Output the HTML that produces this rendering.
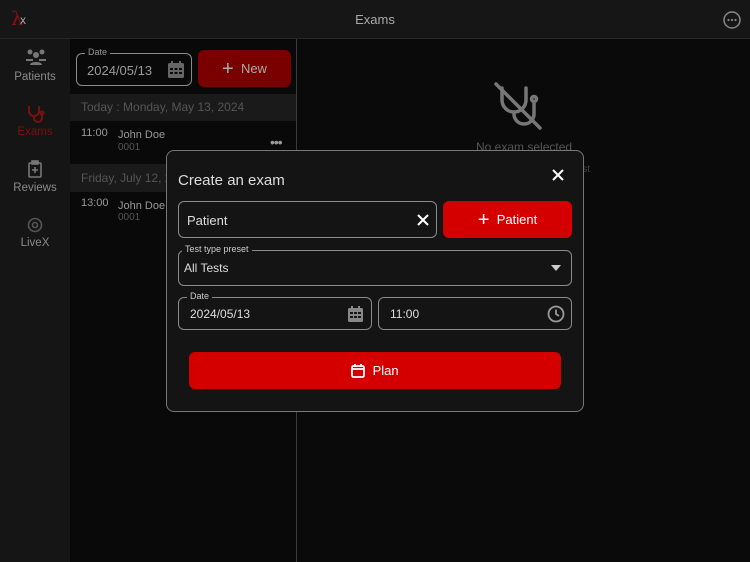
<!DOCTYPE html>
<html><head><meta charset="utf-8"><style>
*{box-sizing:border-box;margin:0;padding:0}
body{width:750px;height:562px;background:#0a0a0a;font-family:"Liberation Sans",sans-serif;color:#ddd;position:relative;overflow:hidden}
.abs{position:absolute}
.top{left:0;top:0;width:750px;height:39px;background:#161616;border-bottom:1px solid #262626}
.side{left:0;top:39px;width:70px;height:523px;background:#151515}
.list{left:70px;top:39px;width:227px;height:523px;background:#090909;border-right:1px solid #3a3a3a}
.nav{width:70px;text-align:center;font-size:11.5px;color:#8a8a8a}
.fld{border:1px solid #8a8a8a;border-radius:6px}
.lbl{position:absolute;top:-7px;left:8px;background:inherit;padding:0 3px;font-size:9px;color:#ccc}
.red{background:#d40000;border-radius:6px;color:#fff}
</style></head><body>
<div class="abs top"></div>
<div class="abs" style="left:11px;top:8px;font-size:19px;color:#8b1010;font-family:'DejaVu Serif',serif">λ</div>
<div class="abs" style="left:20px;top:13px;font-size:12px;color:#aaa">x</div>
<div class="abs" style="left:0;top:12px;width:750px;text-align:center;font-size:13px;color:#aaa">Exams</div>
<svg class="abs" style="left:723px;top:11px" width="18" height="18"><circle cx="9" cy="9" r="8" fill="none" stroke="#888" stroke-width="1.5"/><circle cx="5.5" cy="9" r="1.1" fill="#888"/><circle cx="9" cy="9" r="1.1" fill="#888"/><circle cx="12.5" cy="9" r="1.1" fill="#888"/></svg>
<div class="abs side"></div>
<svg class="abs" style="left:26px;top:49px" width="20" height="17" fill="#777"><circle cx="4" cy="3" r="2.5"/><circle cx="16" cy="3" r="2.5"/><circle cx="10" cy="6" r="3"/><path d="M0 10h7v2H0zM13 10h7v2h-7zM4 16c0-4 12-4 12 0z"/></svg>
<div class="abs nav" style="top:71px">Patients</div>
<svg class="abs" style="left:26px;top:104px" width="20" height="20" fill="none" stroke="#7a1010" stroke-width="2"><path d="M3 2v5a5 5 0 0 0 10 0V2M8 12v2a4 4 0 0 0 8 0v-3"/><circle cx="16" cy="9" r="1.5"/></svg>
<div class="abs nav" style="top:126px;color:#7a1010">Exams</div>
<svg class="abs" style="left:28px;top:160px" width="14" height="18" fill="none" stroke="#777" stroke-width="1.6"><rect x="1" y="3" width="12" height="14" rx="1"/><rect x="4" y="1" width="6" height="3" fill="#777"/><path d="M7 7v6M4 10h6"/></svg>
<div class="abs nav" style="top:182px">Reviews</div>
<svg class="abs" style="left:27px;top:217px" width="16" height="16" fill="none" stroke="#555" stroke-width="1.6"><circle cx="8" cy="8" r="6.5"/><circle cx="8" cy="8" r="2.5"/></svg>
<div class="abs nav" style="top:237px">LiveX</div>
<div class="abs list"></div>
<div class="abs fld" style="left:76px;top:53px;width:116px;height:33px;background:#090909"><span class="lbl" style="background:#090909;color:#999">Date</span><span class="abs" style="left:10px;top:9px;font-size:13px;color:#999">2024/05/13</span>
<svg class="abs" style="left:91px;top:7px" width="16" height="17" fill="#666"><rect x="0" y="2" width="16" height="15" rx="1.5"/><rect x="3" y="0" width="2" height="4"/><rect x="11" y="0" width="2" height="4"/><g fill="#0b0b0b"><rect x="2" y="7" width="3" height="2"/><rect x="6.5" y="7" width="3" height="2"/><rect x="11" y="7" width="3" height="2"/><rect x="2" y="11" width="3" height="2"/><rect x="6.5" y="11" width="3" height="2"/><rect x="11" y="11" width="3" height="2"/></g></svg></div>
<div class="abs" style="left:198px;top:50px;width:93px;height:37px;background:#7a0000;border-radius:6px;color:#aaa;font-size:13px;text-align:center;line-height:37px"><span style="font-size:20px;vertical-align:-2px">+</span>&nbsp; New</div>
<div class="abs" style="left:70px;top:94px;width:226px;height:27px;background:#1a1a1a"></div>
<div class="abs" style="left:81px;top:100px;font-size:12px;color:#555">Today : Monday, May 13, 2024</div>
<div class="abs" style="left:81px;top:127px;font-size:11px;color:#999">11:00</div>
<div class="abs" style="left:118px;top:129px;font-size:11px;color:#999">John Doe</div>
<div class="abs" style="left:118px;top:142px;font-size:10px;color:#555">0001</div>
<div class="abs" style="left:270px;top:134px;font-size:14px;color:#999;letter-spacing:-1px">•••</div>
<div class="abs" style="left:70px;top:164px;width:226px;height:28px;background:#1a1a1a"></div>
<div class="abs" style="left:81px;top:171px;font-size:12px;color:#555">Friday, July 12, 2024</div>
<div class="abs" style="left:81px;top:197px;font-size:11px;color:#999">13:00</div>
<div class="abs" style="left:118px;top:200px;font-size:11px;color:#999">John Doe</div>
<div class="abs" style="left:118px;top:212px;font-size:10px;color:#555">0001</div>
<svg class="abs" style="left:494px;top:82px" width="58" height="48" fill="none" stroke="#777" stroke-width="3.5" stroke-linecap="round"><path d="M8 6v12a12 12 0 0 0 24 0V6M20 30v2a10 10 0 0 0 20 0v-12"/><circle cx="40" cy="17" r="2.5"/><path d="M2 2l44 44"/></svg>
<div class="abs" style="left:476px;top:140px;font-size:12px;color:#555">No exam selected</div>
<div class="abs" style="left:580px;top:164px;font-size:10px;color:#444">ist</div>
<div class="abs" style="left:166px;top:150px;width:418px;height:262px;background:#141414;border:1px solid #777;border-radius:8px"></div>
<div class="abs" style="left:178px;top:172px;font-size:15px;color:#ddd">Create an exam</div>
<svg class="abs" style="left:552px;top:169px" width="12" height="12" stroke="#fff" stroke-width="2"><path d="M1 1l10 10M11 1L1 11"/></svg>
<div class="abs fld" style="left:178px;top:201px;width:259px;height:37px"><span class="abs" style="left:8px;top:11px;font-size:13px">Patient</span>
<svg class="abs" style="left:238px;top:12px" width="12" height="12" stroke="#fff" stroke-width="2"><path d="M1 1l10 10M11 1L1 11"/></svg></div>
<div class="abs red" style="left:443px;top:201px;width:129px;height:37px;font-size:13px;text-align:center;line-height:37px"><span style="font-size:20px;vertical-align:-2px">+</span>&nbsp; Patient</div>
<div class="abs fld" style="left:178px;top:250px;width:394px;height:36px;background:#141414"><span class="lbl" style="left:3px">Test type preset</span><span class="abs" style="left:5px;top:10px;font-size:12px">All Tests</span>
<svg class="abs" style="left:372px;top:14px" width="10" height="6" fill="#ccc"><path d="M0 0h10L5 6z"/></svg></div>
<div class="abs fld" style="left:178px;top:297px;width:194px;height:33px;background:#141414"><span class="lbl" style="left:8px">Date</span><span class="abs" style="left:11px;top:9px;font-size:12px">2024/05/13</span>
<svg class="abs" style="left:169px;top:8px" width="15" height="16" fill="#888"><rect x="0" y="2" width="15" height="14" rx="1.5"/><rect x="3" y="0" width="2" height="4"/><rect x="10" y="0" width="2" height="4"/><g fill="#141414"><rect x="2" y="6" width="3" height="2"/><rect x="6" y="6" width="3" height="2"/><rect x="10" y="6" width="3" height="2"/><rect x="2" y="10" width="3" height="2"/><rect x="6" y="10" width="3" height="2"/><rect x="10" y="10" width="3" height="2"/></g></svg></div>
<div class="abs fld" style="left:378px;top:297px;width:194px;height:33px"><span class="abs" style="left:11px;top:9px;font-size:12px">11:00</span>
<svg class="abs" style="left:168px;top:7px" width="18" height="18" fill="none" stroke="#999" stroke-width="1.8"><circle cx="9" cy="9" r="7.5"/><path d="M9 4.5V9l3 2"/></svg></div>
<div class="abs red" style="left:189px;top:352px;width:372px;height:37px;font-size:13px;text-align:center;line-height:37px">
<svg style="vertical-align:-3px" width="14" height="15" fill="none" stroke="#fff" stroke-width="1.8"><rect x="1" y="3" width="12" height="11" rx="1.5"/><path d="M1 6h12M4 1v3M10 1v3"/></svg>&nbsp; Plan</div>
</body></html>
